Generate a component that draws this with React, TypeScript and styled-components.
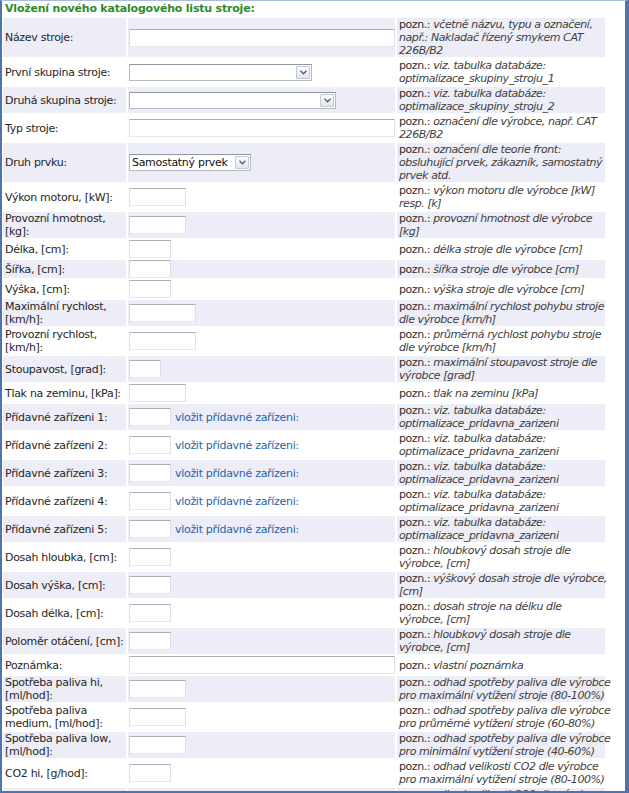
import React, { FC } from "react";
import styled, { createGlobalStyle } from "styled-components";

const GlobalStyle = createGlobalStyle`
    html, body {
        margin: 0;
        padding: 0;
        background: #fff;
    }
    body {
        font-family: "DejaVu Sans", Verdana, sans-serif;
        font-size: 11px;
        letter-spacing: -0.3px;
        color: #2b2b2b;
    }
`;

const Frame = styled.div`
    box-sizing: border-box;
    width: 629px;
    height: 793px;
    overflow: hidden;
    background: #fff;
    border-top: 1px solid #a9bddb;
    border-left: 2px solid #4d74ae;
    border-right: 4px solid #4d74ae;
    border-bottom: 2px solid #4d74ae;
`;

const Heading = styled.div`
    height: 15px;
    line-height: 15px;
    padding-left: 3px;
    font-weight: 700;
    color: #2f8a2a;
    letter-spacing: -0.2px;
`;

const Table = styled.table`
    border-collapse: separate;
    border-spacing: 2px;
    margin-left: -1px;
    table-layout: fixed;
    width: 606px;
`;

const Cell = styled.td<{ $shaded: boolean }>`
    padding: 0;
    vertical-align: middle;
    line-height: 13px;
    background: ${p => (p.$shaded ? "#ededf7" : "transparent")};
`;

const LabelCell = styled(Cell)`
    padding-left: 2px;
    white-space: nowrap;
    color: #262626;
`;

const FieldCell = styled(Cell)`
    padding-left: 1px;
`;

const FieldWrap = styled.div`
    display: flex;
    align-items: center;
    gap: 4px;
`;

const NoteCell = styled(Cell)`
    padding-left: 2px;
    white-space: nowrap;
    letter-spacing: -0.42px;
    color: #2e2e2e;
`;

const NoteText = styled.em`
    font-style: italic;
    color: #404040;
`;

const TextInput = styled.input<{ $width: number }>`
    box-sizing: border-box;
    width: ${p => p.$width}px;
    height: 18px;
    margin: 0;
    padding: 0 2px;
    border: 1px solid #dbdfe6;
    border-top-color: #abadb3;
    border-bottom-color: #e3e9ef;
    background: #fff;
    font: inherit;
`;

const SelectBox = styled.div<{ $width: number }>`
    box-sizing: border-box;
    display: flex;
    align-items: center;
    width: ${p => p.$width}px;
    height: 17px;
    padding: 0 1px 0 2px;
    border: 1px solid #b5bac2;
    border-top-color: #8e97a3;
    background: #fff;
`;

const SelectValue = styled.span`
    flex: 1;
    line-height: 15px;
    white-space: nowrap;
    overflow: hidden;
    color: #111;
`;

const SelectButton = styled.span`
    box-sizing: border-box;
    display: flex;
    align-items: center;
    justify-content: center;
    width: 14px;
    height: 13px;
    border: 1px solid #c5cad2;
    border-radius: 1px;
    background: linear-gradient(#fafbfc, #e4e7eb);
`;

const AddLink = styled.a`
    color: #2563a8;
    text-decoration: none;
    white-space: nowrap;
`;

type Field =
    | { kind: "text"; width: number }
    | { kind: "select"; width: number; value?: string }
    | { kind: "attach" };

interface RowData {
    label: string[];
    field: Field;
    note: string[];
}

const FULL = 266;

const rows: RowData[] = [
    { label: ["Název stroje:"], field: { kind: "text", width: FULL }, note: ["včetně názvu, typu a označení,", "např.: Nakladač řízený smykem CAT", "226B/B2"] },
    { label: ["První skupina stroje:"], field: { kind: "select", width: 183 }, note: ["viz. tabulka databáze:", "optimalizace_skupiny_stroju_1"] },
    { label: ["Druhá skupina stroje:"], field: { kind: "select", width: 207 }, note: ["viz. tabulka databáze:", "optimalizace_skupiny_stroju_2"] },
    { label: ["Typ stroje:"], field: { kind: "text", width: FULL }, note: ["označení dle výrobce, např. CAT", "226B/B2"] },
    { label: ["Druh prvku:"], field: { kind: "select", width: 122, value: "Samostatný prvek" }, note: ["označení dle teorie front:", "obsluhující prvek, zákazník, samostatný", "prvek atd."] },
    { label: ["Výkon motoru, [kW]:"], field: { kind: "text", width: 57 }, note: ["výkon motoru dle výrobce [kW]", "resp. [k]"] },
    { label: ["Provozní hmotnost,", "[kg]:"], field: { kind: "text", width: 57 }, note: ["provozní hmotnost dle výrobce", "[kg]"] },
    { label: ["Délka, [cm]:"], field: { kind: "text", width: 42 }, note: ["délka stroje dle výrobce [cm]"] },
    { label: ["Šířka, [cm]:"], field: { kind: "text", width: 42 }, note: ["šířka stroje dle výrobce [cm]"] },
    { label: ["Výška, [cm]:"], field: { kind: "text", width: 42 }, note: ["výška stroje dle výrobce [cm]"] },
    { label: ["Maximální rychlost,", "[km/h]:"], field: { kind: "text", width: 67 }, note: ["maximální rychlost pohybu stroje", "dle výrobce [km/h]"] },
    { label: ["Provozní rychlost,", "[km/h]:"], field: { kind: "text", width: 67 }, note: ["průměrná rychlost pohybu stroje", "dle výrobce [km/h]"] },
    { label: ["Stoupavost, [grad]:"], field: { kind: "text", width: 32 }, note: ["maximální stoupavost stroje dle", "výrobce [grad]"] },
    { label: ["Tlak na zeminu, [kPa]:"], field: { kind: "text", width: 57 }, note: ["tlak na zeminu [kPa]"] },
    ...[1, 2, 3, 4, 5].map(n => ({
        label: [`Přídavné zařízeni ${n}:`],
        field: { kind: "attach" } as Field,
        note: ["viz. tabulka databáze:", "optimalizace_pridavna_zarizeni"],
    })),
    { label: ["Dosah hloubka, [cm]:"], field: { kind: "text", width: 42 }, note: ["hloubkový dosah stroje dle", "výrobce, [cm]"] },
    { label: ["Dosah výška, [cm]:"], field: { kind: "text", width: 42 }, note: ["výškový dosah stroje dle výrobce,", "[cm]"] },
    { label: ["Dosah délka, [cm]:"], field: { kind: "text", width: 42 }, note: ["dosah stroje na délku dle", "výrobce, [cm]"] },
    { label: ["Poloměr otáčení, [cm]:"], field: { kind: "text", width: 42 }, note: ["hloubkový dosah stroje dle", "výrobce, [cm]"] },
    { label: ["Poznámka:"], field: { kind: "text", width: FULL }, note: ["vlastní poznámka"] },
    { label: ["Spotřeba paliva hi,", "[ml/hod]:"], field: { kind: "text", width: 57 }, note: ["odhad spotřeby paliva dle výrobce", "pro maximální vytížení stroje (80-100%)"] },
    { label: ["Spotřeba paliva", "medium, [ml/hod]:"], field: { kind: "text", width: 57 }, note: ["odhad spotřeby paliva dle výrobce", "pro průměrné vytížení stroje (60-80%)"] },
    { label: ["Spotřeba paliva low,", "[ml/hod]:"], field: { kind: "text", width: 57 }, note: ["odhad spotřeby paliva dle výrobce", "pro minimální vytížení stroje (40-60%)"] },
    { label: ["CO2 hi, [g/hod]:"], field: { kind: "text", width: 42 }, note: ["odhad velikosti CO2 dle výrobce", "pro maximální vytížení stroje (80-100%)"] },
    { label: ["CO2 medium, [g/hod]:"], field: { kind: "text", width: 42 }, note: ["odhad velikosti CO2 dle výrobce", "pro průměrné vytížení stroje (60-80%)"] },
];

const Chevron: FC = () => (
    <svg width="7" height="5" viewBox="0 0 7 5">
        <path d="M0.5 0.8 L3.5 3.8 L6.5 0.8" fill="none" stroke="#4c607f" strokeWidth="1.3" />
    </svg>
);

const FieldControl: FC<{ field: Field }> = ({ field }) => {
    if (field.kind === "select") {
        return (
            <SelectBox $width={field.width}>
                <SelectValue>{field.value ?? ""}</SelectValue>
                <SelectButton>
                    <Chevron />
                </SelectButton>
            </SelectBox>
        );
    }
    if (field.kind === "attach") {
        return (
            <FieldWrap>
                <TextInput $width={42} />
                <AddLink href="#">vložit přídavné zařízeni:</AddLink>
            </FieldWrap>
        );
    }
    return (
        <FieldWrap>
            <TextInput $width={field.width} />
        </FieldWrap>
    );
};

const withBreaks = (lines: string[]) =>
    lines.map((line, i) => (
        <React.Fragment key={i}>
            {i > 0 && <br />}
            {line}
        </React.Fragment>
    ));

const App: FC = () => {
    return (
        <Frame>
            <GlobalStyle />
            <Heading>Vložení nového katalogového listu stroje:</Heading>
            <Table>
                <colgroup>
                    <col style={{ width: 123 }} />
                    <col style={{ width: 267 }} />
                    <col style={{ width: 208 }} />
                </colgroup>
                <tbody>
                    {rows.map((row, i) => {
                        const shaded = i % 2 === 0;
                        const [first, ...rest] = row.note;
                        return (
                            <tr key={i}>
                                <LabelCell $shaded={shaded}>{withBreaks(row.label)}</LabelCell>
                                <FieldCell $shaded={shaded}>
                                    <FieldControl field={row.field} />
                                </FieldCell>
                                <NoteCell $shaded={shaded}>
                                    pozn.: <NoteText>{first}</NoteText>
                                    {rest.map((line, j) => (
                                        <React.Fragment key={j}>
                                            <br />
                                            <NoteText>{line}</NoteText>
                                        </React.Fragment>
                                    ))}
                                </NoteCell>
                            </tr>
                        );
                    })}
                </tbody>
            </Table>
        </Frame>
    );
};

export default App;
